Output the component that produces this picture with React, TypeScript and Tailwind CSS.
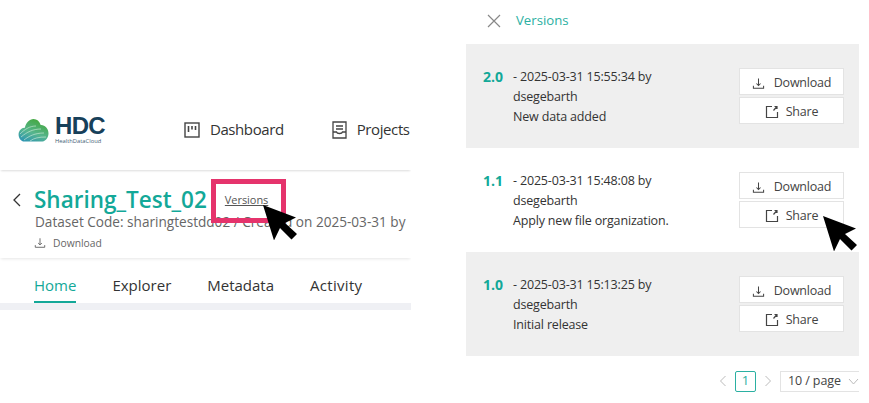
import React from "react";

const font = { fontFamily: '"Open Sans", "Noto Sans", sans-serif' };

const versions = [
  { no: "2.0", date: "2025-03-31 15:55:34", note: "New data added", gray: true },
  { no: "1.1", date: "2025-03-31 15:48:08", note: "Apply new file organization.", gray: false },
  { no: "1.0", date: "2025-03-31 15:13:25", note: "Initial release", gray: true },
];

function DownloadIcon({ size = 13 }: { size?: number }) {
  return (
    <svg width={size} height={size} viewBox="0 0 14 14" fill="none" stroke="currentColor" strokeWidth="1.1">
      <path d="M7 1.500v7.500M4.800 7l2.200 2.200L9.200 7M1.500 9.500v2.500h11v-2.500" />
    </svg>
  );
}

function ShareIcon() {
  return (
    <svg width="14" height="14" viewBox="0 0 14 14" fill="none" stroke="currentColor" strokeWidth="1.2">
      <path d="M7 1.500H1.500v11h11V7M8.500 5.500l3-3.500M9.500 1.500h2.500v2.500" />
    </svg>
  );
}

function Cursor({ className }: { className: string }) {
  return (
    <svg className={className} width="36" height="36" viewBox="0 0 36 36">
      <path d="M1 1l33 12.500-11 5.500 12 11-5.500 5.500-11.500-11.500-6 12.500z" fill="#000" />
    </svg>
  );
}

function Logo() {
  return (
    <div className="flex items-center gap-[6px]">
      <svg width="31" height="24" viewBox="0 0 31 24">
        <defs>
          <linearGradient id="cloud" x1="0.1" y1="1" x2="0.6" y2="0">
            <stop offset="0" stopColor="#2b93b5" />
            <stop offset="0.45" stopColor="#56b58f" />
            <stop offset="1" stopColor="#45a83f" />
          </linearGradient>
        </defs>
        <path
          d="M5 23.500C1.500 22 0 18 .8 14.500 1.800 11.500 4 9.800 6.800 9.800 8 4.500 11.500 1 15.500 1c3.500 0 6 2.200 7.200 6 4.200-.3 7.800 3.500 7.800 8.200 0 4.300-2.500 7.500-6 8.300z"
          fill="url(#cloud)"
        />
        <path
          d="M2 16c5-5 10-8 16-8M3 19c6-5 12-8 20-8M6 22c5-4 11-7 20-7M12 23c4-3 9-4 16-4"
          stroke="#d6eedd"
          strokeWidth="0.6"
          fill="none"
        />
      </svg>
      <div className="flex flex-col leading-none">
        <span
          className="text-[24px] h-[21px] leading-[21px] font-semibold text-[#17405a] tracking-[-0.7px]"
          style={{ fontFamily: '"Liberation Sans", sans-serif' }}
        >
          HDC
        </span>
        <span className="text-[5.800px] mt-[2px] leading-[7px] text-[#3f6175]">HealthDataCloud</span>
      </div>
    </div>
  );
}

function BoardIcon() {
  return (
    <svg width="16" height="16" viewBox="0 0 16 16" fill="none" stroke="#444" strokeWidth="1.400">
      <rect x="1" y="1" width="14" height="14" />
      <path d="M4.500 4v6M8 4v3.500M11.500 4v4" strokeWidth="1.600" />
    </svg>
  );
}

function ProjectIcon() {
  return (
    <svg width="15" height="18" viewBox="0 0 15 18" fill="none" stroke="#444" strokeWidth="1.300">
      <path d="M1 1h13v16H1z" />
      <path d="M4 5h7M4 8h7M1 11h3.500c.5 2 5.500 2 6 0H14" />
    </svg>
  );
}

function VersionCard({ no, date, note, gray }: { no: string; date: string; note: string; gray: boolean }) {
  return (
    <div className={`flex items-center h-[104px] pl-[17px] pr-[15px] ${gray ? "bg-[#efefef]" : "bg-white"}`}>
      <div className="flex-1 flex items-start pt-[2px]">
        <span className="w-[30px] text-[14px] leading-[20px] font-bold text-[#13a898]">{no}</span>
        <div className="text-[12.500px] tracking-[-0.17px] leading-[20px] text-[#333]">
          <div>- {date} by</div>
          <div>dsegebarth</div>
          <div>{note}</div>
        </div>
      </div>
      <div className="flex flex-col gap-[2px] w-[105px]">
        <button className="h-[27px] pt-[3px] flex items-center justify-center gap-[9px] bg-white border border-[#e3e3e3] text-[12.500px] tracking-[-0.2px] text-[#444]">
          <DownloadIcon />
          Download
        </button>
        <button className="h-[27px] pt-[3px] flex items-center justify-center gap-[7px] bg-white border border-[#e3e3e3] text-[12.500px] tracking-[-0.2px] text-[#444]">
          <ShareIcon />
          Share
        </button>
      </div>
    </div>
  );
}

export default function App() {
  return (
    <div className="flex w-[869px] h-[403px] bg-white overflow-hidden relative" style={font}>
      {/* left: dataset page */}
      <div className="w-[411px] shrink-0 overflow-hidden pt-[95px]">
        <div className="h-[75px] flex items-center pl-[18px] pb-[6px] shadow-[0_2px_2px_-1px_rgba(0,0,0,0.14)] whitespace-nowrap">
          <Logo />
          <div className="flex items-center gap-[10px] ml-[79px] text-[15px] tracking-[-0.4px] text-[#333]">
            <BoardIcon />
            Dashboard
          </div>
          <div className="flex items-center gap-[10px] ml-[48px] text-[15px] tracking-[-0.4px] text-[#333]">
            <ProjectIcon />
            Projects
          </div>
        </div>
        <div className="relative h-[88px] pl-[12px] pt-[12px] shadow-[0_2px_3px_-1px_rgba(0,0,0,0.1)] whitespace-nowrap">
          <div className="flex items-center h-[36px]">
            <svg width="10" height="14" viewBox="0 0 10 14" fill="none" stroke="#333" strokeWidth="1.300">
              <path d="M8 1L2 7l6 6" />
            </svg>
            <span className="ml-[12px] text-[22.500px] font-semibold text-[#13a898]">Sharing_Test_02</span>
            <span className="ml-[18px] mt-[1px] text-[11px] tracking-[-0.05px] text-[#555] underline">Versions</span>
          </div>
          <div className="-mt-[5px] pl-[23px] text-[13.600px] leading-[18px] text-[#666]">
            Dataset Code: sharingtestdd02 / Created on 2025-03-31 by
          </div>
          <div className="flex items-center gap-[7px] pl-[22px] mt-[4px] text-[10.300px] leading-[16px] text-[#666]">
            <DownloadIcon size={12} />
            Download
          </div>
        </div>
        <div className="flex gap-[36px] pl-[34px] h-[45px] text-[15px] text-[#333] border-b-[7px] border-[#eff0f4] box-content">
          <div className="h-[45px] leading-[54px] text-[#13a898] border-b-2 border-[#13a898]">Home</div>
          <div className="leading-[54px]">Explorer</div>
          <div className="leading-[54px]">Metadata</div>
          <div className="leading-[54px] tracking-[0.3px]">Activity</div>
        </div>
      </div>

      {/* right: versions drawer */}
      <div className="ml-[55px] w-[393px] shrink-0">
        <div className="h-[44px] flex items-center pl-[21px] pb-[3px] gap-[15px]">
          <svg width="14" height="14" viewBox="0 0 14 14" stroke="#888" strokeWidth="1.200">
            <path d="M1 1l12 12M13 1L1 13" />
          </svg>
          <span className="text-[13.200px] text-[#2bb0a2]">Versions</span>
        </div>
        {versions.map((v) => (
          <VersionCard key={v.no} {...v} />
        ))}
        <div className="flex items-center justify-end mt-[14px] h-[22px] text-[13px] whitespace-nowrap">
          <svg width="8" height="12" viewBox="0 0 8 12" fill="none" stroke="#bbb" strokeWidth="1">
            <path d="M6.500 1l-5 5 5 5" />
          </svg>
          <span className="ml-[8px] w-[21px] h-[21px] flex items-center justify-center border border-[#2bb0a2] rounded-[2px] text-[#2bb0a2]">
            1
          </span>
          <svg className="ml-[8px]" width="8" height="12" viewBox="0 0 8 12" fill="none" stroke="#bbb" strokeWidth="1">
            <path d="M1.500 1l5 5-5 5" />
          </svg>
          <div className="ml-[8px] w-[79px] h-[21px] flex items-center pl-[7px] gap-[7px] border border-r-0 border-[#e3e3e3] text-[12.500px] tracking-[-0.1px] text-[#444]">
            10 / page
            <svg width="11" height="7" viewBox="0 0 11 7" fill="none" stroke="#bbb" strokeWidth="1">
              <path d="M1 1l4.500 5L10 1" />
            </svg>
          </div>
        </div>
      </div>

      {/* annotations over the screenshots */}
      <div className="absolute left-[211px] top-[179px] w-[75px] h-[44px] border-[5px] border-[#e5336c]" />
      <Cursor className="absolute left-[262px] top-[204px]" />
      <Cursor className="absolute left-[822px] top-[215px]" />
    </div>
  );
}
